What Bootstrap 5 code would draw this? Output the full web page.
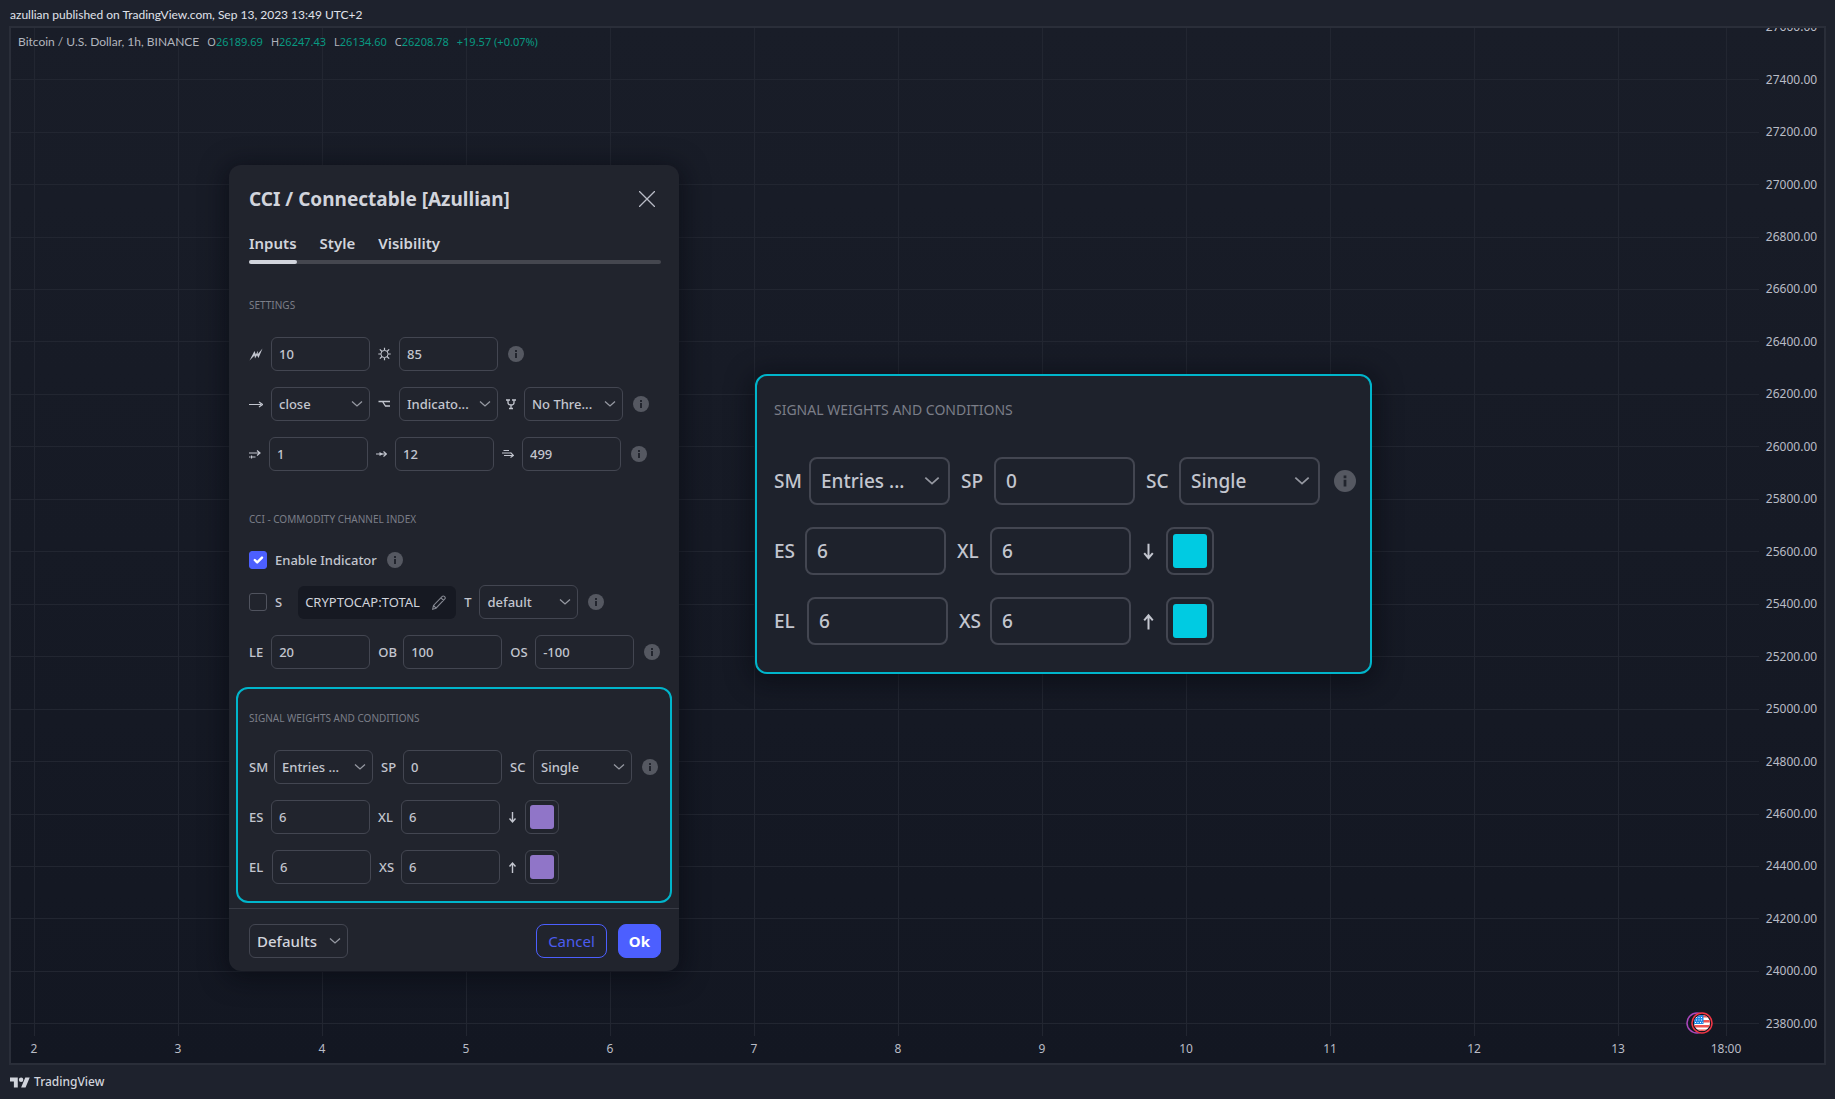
<!DOCTYPE html>
<html lang="en" data-bs-theme="dark">
<head>
<meta charset="utf-8">
<meta name="viewport" content="width=device-width, initial-scale=1">
<title>CCI / Connectable [Azullian]</title>
<link href="https://cdn.jsdelivr.net/npm/bootstrap@5.3.0/dist/css/bootstrap.min.css" rel="stylesheet">
<style>
:root{--tv-text:#d1d4dc;--tv-soft:#b9bcc6;--tv-line:#434651;--tv-dialog:#21242d;--tv-cyan:#00b5cb;--tv-blue:#4c5fff}
body{background:#1e222d;color:var(--tv-text);font-family:"Noto Sans","Open Sans",sans-serif;font-size:12px;line-height:16px}
.page-head{height:26px;padding:3px 10px 0;font-family:Lato,"Noto Sans",sans-serif;font-size:12px;color:#e0e3eb}
.page-foot{height:34px;padding:0 10px 0;font-size:12px;font-weight:500}
.chart-frame{margin:0 9px;border:2px solid #2a2e39;background:linear-gradient(#191d28,#131722);min-height:960px}
.time-scale{height:27px;margin-left:-49px;margin-right:62px;padding-top:5px;line-height:16px;color:var(--tv-soft)}
.t-cell{flex:2 0 0;text-align:center}
.t-cell:last-child,.v-cell:last-child{flex-grow:1}
.v-cell{flex:2 0 0;display:flex;justify-content:center}
.v-cell::before{content:"";width:1px;background:#222631}
.v-lines{left:-49px;right:-3px;top:0;bottom:0}
.h-lines{left:0;right:0;top:-27px;bottom:-14px}
.h-cell{flex:1 0 0;display:flex;align-items:center}
.h-cell::before{content:"";height:1px;width:100%;background:#222631}
.price-scale{width:65px;margin:-27px 0 -14px;color:var(--tv-soft)}
.p-cell{flex:1 0 0;display:flex;align-items:center;justify-content:center}
.plot{min-width:0}
.legend{left:7px;top:6px;color:#b2b5be}
.legend-name{font-family:Lato,"Noto Sans",sans-serif}
.legend .ohlc{font-size:11px}
.legend b{font-weight:400;color:#089981}
.event-pin{right:46px;bottom:1px}

.win{background:var(--tv-dialog);border-radius:12px;box-shadow:0 4px 24px 4px rgba(5,7,14,.55)}
.win-settings{left:218px;top:137px;width:450px}
.win-zoom{left:744px;top:346px;width:617px;border:2px solid var(--tv-cyan);background:#1e222c;padding:22px 17px 27px}
.win-body{padding:20px 20px 0}
.win-title{font-size:19px;line-height:28px;font-weight:700;margin:0 0 20px;color:var(--tv-text)}
.x-btn{background:none;border:0;padding:0;width:28px;height:28px;margin-right:-2px;color:#b9bcc6}
.tabs{height:31px;margin-bottom:33px;gap:23px;position:relative}
.tabs::before{content:"";position:absolute;left:0;right:-2px;bottom:0;height:4px;border-radius:2px;background:#45474f}
.tab-btn{background:none;border:0;padding:0 0 11px;font-size:15px;line-height:20px;font-weight:600;color:var(--tv-text);position:relative}
.tab-btn[aria-selected=true]::after{content:"";position:absolute;left:0;right:0;bottom:0;height:4px;border-radius:2px;background:var(--tv-text)}
.caption{font-size:10px;line-height:16px;font-weight:400;color:#7b7e88;margin:0 0 24px}
.stack{display:flex;flex-direction:column;gap:16px}
.stack+.caption{margin-top:40px}
.line{display:flex;align-items:center;gap:8px;font-size:13px;font-weight:500;color:#c3c6cf}
.line label{white-space:nowrap;line-height:18px}
.line svg{flex:none}
.lb-14{width:14px}.lb-15{width:15px}.lb-17{width:17px}
.box,.box:focus{flex:none;width:99px;height:34px;padding:0 7px;border:1px solid var(--tv-line);border-radius:6px;background-color:transparent;color:#c3c6cf;font-size:13px;line-height:18px;font-weight:500;box-shadow:none}
select.box,select.box:focus{background-image:url("data:image/svg+xml,%3csvg xmlns='http://www.w3.org/2000/svg' viewBox='0 0 12 12'%3e%3cpath fill='none' stroke='%239598a1' stroke-width='1.3' d='M1 3.500l5 4.500 5-4.500'/%3e%3c/svg%3e");background-size:12px 12px;background-position:right 6px center;padding-right:18px;text-overflow:clip}
.swatch{flex:none;width:34px;height:34px;padding:0;border:1px solid var(--tv-line);border-radius:6px;background:none;appearance:none}
.swatch::-webkit-color-swatch-wrapper{padding:4px}
.swatch::-webkit-color-swatch{border:0;border-radius:3px}
.info{margin-left:2px}
.tick{width:18px;height:18px;margin:0;flex:none;border:1px solid #50535e;border-radius:3px!important;background-color:transparent}
.tick:checked{background-color:var(--tv-blue);border-color:var(--tv-blue)}
.symbol{height:33px;width:158px;padding:0 10px 0 7px;margin-left:8px;border:0;border-radius:6px;background:#161922;color:#d1d4dc;font-size:13px;display:flex;align-items:center;justify-content:space-between}
.marked{border:2px solid var(--tv-cyan);border-radius:12px;margin:18px -13px 5px;padding:21px 11px 17px}
.win-foot{border-top:1px solid #383b45;padding:15px 18px 13px 20px;gap:11px}
.win-foot .box{font-size:15px;color:var(--tv-text)}
.act{height:34px;padding:0 11px;border-radius:8px;font-size:15px;line-height:20px}
.act-cancel{border:1px solid var(--tv-blue);color:#4c5cf0;background:none}
.act-ok{border:1px solid var(--tv-blue);background:var(--tv-blue);color:#fff;font-weight:700;padding:0 10px}

.big .caption{font-size:14px;line-height:24px;margin:0 0 35px}
.big .stack{gap:22px}
.big .line{gap:11px;font-size:19px}
.big .line label{line-height:26px}
.big .box{width:141px;height:48px;border-width:2px;border-radius:8px;padding-left:10px;font-size:19px;line-height:26px}
.big select.box{background-size:16px 16px;background-position:right 8px center}
.big .swatch{width:48px;height:48px;border-width:2px;border-radius:8px}
.big .swatch::-webkit-color-swatch-wrapper{padding:5px}
.big .lb-14{width:20px}.big .lb-15{width:22px}.big .lb-17{width:24px}
.big .info{width:22px;height:22px;margin-left:3px}
.big .arr{width:13px;height:20px}
</style>
<script src="https://cdn.jsdelivr.net/npm/bootstrap@5.3.0/dist/js/bootstrap.bundle.min.js"></script>
</head>
<body class="d-flex flex-column min-vh-100">
<svg class="d-none" xmlns="http://www.w3.org/2000/svg">
  <symbol id="i-info" viewBox="0 0 16 16"><circle cx="8" cy="8" r="8" fill="#555861"/><path d="M7 4h2v2H7zM7 7h2v5H7z" fill="#22252e"/></symbol>
  <symbol id="i-down" viewBox="0 0 9 14"><path d="M4.500 2v9.500M1.500 8.500l3 3.500 3-3.500" fill="none" stroke="currentColor" stroke-width="1.400"/></symbol>
  <symbol id="i-up" viewBox="0 0 9 14"><path d="M4.500 13V3.500M1.500 6.500l3-3.500 3 3.500" fill="none" stroke="currentColor" stroke-width="1.400"/></symbol>
</svg>

<header class="page-head d-flex align-items-center">azullian published on TradingView.com, Sep 13, 2023 13:49 UTC+2</header>

<main class="chart-frame flex-grow-1 d-flex flex-column position-relative overflow-hidden">
  <div class="d-flex flex-grow-1">
    <div class="plot flex-grow-1 position-relative">
      <div class="v-lines position-absolute d-flex" id="vLines"></div>
      <div class="h-lines position-absolute d-flex flex-column" id="hLines"></div>
      <svg class="event-pin position-absolute" width="28" height="24" viewBox="0 0 28 24" role="img" aria-label="Economic event">
        <circle cx="12" cy="12" r="10" fill="#131722" stroke="#ab47bc" stroke-width="1.500"/>
        <circle cx="17" cy="12" r="10" fill="#131722" stroke="#f23645" stroke-width="1.500"/>
        <clipPath id="fl"><circle cx="17" cy="12" r="8"/></clipPath>
        <g clip-path="url(#fl)"><path fill="#fff" d="M9 4h16v16H9z"/><path fill="#ef5350" d="M9 4h16v2.500H9zM9 9h16v2.500H9zM9 14h16v2.500H9z M9 18.500h16V20H9z"/><path fill="#1e88e5" d="M9 4h9.500v9H9z"/><path d="M11 6.500h7M11 9h7M10 11.500h8" stroke="#fff" stroke-width="1" stroke-dasharray="1 1.500"/></g>
      </svg>
    </div>
    <div class="price-scale d-flex flex-column" id="prices"></div>
  </div>
  <div class="time-scale d-flex" id="times"></div>

  <div class="legend position-absolute d-flex">
    <span class="legend-name me-2">Bitcoin / U.S. Dollar, 1h, BINANCE</span>
    <span class="ohlc d-flex gap-2"><span>O<b>26189.69</b></span><span>H<b>26247.43</b></span><span>L<b>26134.60</b></span><span>C<b>26208.78</b></span><b>+19.57 (+0.07%)</b></span>
  </div>

  <form class="win win-settings position-absolute" role="dialog" aria-labelledby="dlgTitle">
    <div class="win-body">
      <div class="d-flex justify-content-between">
        <h1 class="win-title" id="dlgTitle">CCI / Connectable [Azullian]</h1>
        <button type="button" class="x-btn" aria-label="Close"><svg width="16" height="16" viewBox="0 0 16 16"><path d="M0 0l16 16M16 0L0 16" stroke="currentColor" stroke-width="1.300"/></svg></button>
      </div>
      <div class="tabs d-flex" role="tablist">
        <button type="button" class="tab-btn" role="tab" aria-selected="true">Inputs</button>
        <button type="button" class="tab-btn" role="tab" aria-selected="false">Style</button>
        <button type="button" class="tab-btn" role="tab" aria-selected="false">Visibility</button>
      </div>

      <h2 class="caption">SETTINGS</h2>
      <div class="stack">
        <div class="line">
          <label for="len" aria-label="Length" class="d-flex"><svg width="14" height="14" viewBox="0 0 14 14"><path d="M.5 13.500L5.500 4l1.300 3.500L9 3.800l-.3 3.400L13.500 1.500 9.500 11 8 8.200 6 11.500l-.5-3z" fill="currentColor"/></svg></label>
          <input class="form-control box" id="len" value="10">
          <label for="smooth" aria-label="Smoothing" class="d-flex"><svg width="13" height="14" viewBox="0 0 13 14"><g fill="none" stroke="currentColor"><circle cx="6.500" cy="7" r="3.600"/><path d="M6.500 .8v2.500M6.500 10.700v2.500M.3 7h2.500M10.200 7h2.500M1.800 2.300l2.200 2.200M9 4.500l2.200-2.200M1.800 11.700L4 9.500M9 9.500l2.200 2.200" stroke-width="1.200"/></g></svg></label>
          <input class="form-control box" id="smooth" value="85">
          <svg class="info" width="16" height="16"><use href="#i-info"/></svg>
        </div>
        <div class="line">
          <label for="src" aria-label="Source" class="d-flex"><svg width="14" height="14" viewBox="0 0 14 14"><path d="M0 7.500h12M10 5l3.500 2.500L10 10" fill="none" stroke="currentColor" stroke-width="1.200"/></svg></label>
          <select class="form-select box" id="src"><option>close</option></select>
          <label for="kind" aria-label="Mode" class="d-flex"><svg width="13" height="14" viewBox="0 0 13 14"><path d="M.5 4.500h11.500M4.500 4.500l3 4.500H12" fill="none" stroke="currentColor" stroke-width="1.300"/></svg></label>
          <select class="form-select box" id="kind"><option>Indicato...</option></select>
          <label for="thr" aria-label="Threshold" class="d-flex"><svg width="10" height="14" viewBox="0 0 10 14"><path d="M0 3h4M6 3h4M2 3v2.500q0 2.500 3 2.500t3-2.500V3M5 8v3.500M3 11.500h4" fill="none" stroke="currentColor" stroke-width="1.300"/></svg></label>
          <select class="form-select box" id="thr"><option>No Thre...</option></select>
          <svg class="info" width="16" height="16"><use href="#i-info"/></svg>
        </div>
        <div class="line">
          <label for="n1" aria-label="From" class="d-flex"><svg width="12" height="14" viewBox="0 0 12 14"><path d="M0 6h11M8 3.500L11 6 8 8.500M0 10h1.500M2.500 10h4M2.500 8.500v3" fill="none" stroke="currentColor" stroke-width="1.200"/></svg></label>
          <input class="form-control box" id="n1" value="1">
          <label for="n2" aria-label="Through" class="d-flex"><svg width="11" height="14" viewBox="0 0 11 14"><path d="M0 7h10M7.500 4.500L10.500 7l-3 2.500" fill="none" stroke="currentColor" stroke-width="1.200"/><path d="M3.500 5L7 7 3.500 9z" fill="currentColor"/></svg></label>
          <input class="form-control box" id="n2" value="12">
          <label for="n3" aria-label="Until" class="d-flex"><svg width="12" height="14" viewBox="0 0 12 14"><path d="M1.500 3.500H7M0 6h8.500M2 8.500h9M8.500 5.500l3 3-3 2" fill="none" stroke="currentColor" stroke-width="1.100"/></svg></label>
          <input class="form-control box" id="n3" value="499">
          <svg class="info" width="16" height="16"><use href="#i-info"/></svg>
        </div>
      </div>

      <h2 class="caption">CCI - COMMODITY CHANNEL INDEX</h2>
      <div class="stack">
        <div class="line">
          <input type="checkbox" class="form-check-input tick" id="enable" checked>
          <label for="enable">Enable Indicator</label>
          <svg class="info" width="16" height="16"><use href="#i-info"/></svg>
        </div>
        <div class="line">
          <input type="checkbox" class="form-check-input tick" id="useSym">
          <label for="useSym">S</label>
          <button type="button" class="symbol"><span>CRYPTOCAP:TOTAL</span><svg width="14" height="15" viewBox="0 0 14 15"><path d="M.7 14.200l.8-3.800L10.300 1.400q1-.9 2 0l.5.500q.9 1 0 2L4 13.200zM9 2.800l2.700 2.700M1.500 10.400L4 13.200" fill="none" stroke="#868993" stroke-width="1.100"/></svg></button>
          <label for="tf">T</label>
          <select class="form-select box" id="tf"><option>default</option></select>
          <svg class="info" width="16" height="16"><use href="#i-info"/></svg>
        </div>
        <div class="line">
          <label class="lb-15" for="le">LE</label><input class="form-control box" id="le" value="20">
          <label class="lb-17" for="ob">OB</label><input class="form-control box" id="ob" value="100">
          <label class="lb-17" for="os">OS</label><input class="form-control box" id="os" value="-100">
          <svg class="info" width="16" height="16"><use href="#i-info"/></svg>
        </div>
      </div>

      <section class="marked">
        <h2 class="caption">SIGNAL WEIGHTS AND CONDITIONS</h2>
        <div class="stack">
          <div class="line">
            <label class="lb-17" for="sm">SM</label><select class="form-select box" id="sm"><option>Entries ...</option></select>
            <label class="lb-14" for="sp">SP</label><input class="form-control box" id="sp" value="0">
            <label class="lb-15" for="sc">SC</label><select class="form-select box" id="sc"><option>Single</option></select>
            <svg class="info" width="16" height="16"><use href="#i-info"/></svg>
          </div>
          <div class="line">
            <label class="lb-14" for="es">ES</label><input class="form-control box" id="es" value="6">
            <label class="lb-15" for="xl">XL</label><input class="form-control box" id="xl" value="6">
            <label for="c1" class="d-flex" aria-label="Down colour"><svg class="arr" width="9" height="14"><use href="#i-down"/></svg></label><input type="color" class="swatch" id="c1" value="#9075c8">
          </div>
          <div class="line">
            <label class="lb-15" for="el">EL</label><input class="form-control box" id="el" value="6">
            <label class="lb-14" for="xs">XS</label><input class="form-control box" id="xs" value="6">
            <label for="c2" class="d-flex" aria-label="Up colour"><svg class="arr" width="9" height="14"><use href="#i-up"/></svg></label><input type="color" class="swatch" id="c2" value="#9075c8">
          </div>
        </div>
      </section>
    </div>
    <div class="win-foot d-flex">
      <select class="form-select box me-auto" aria-label="Defaults"><option>Defaults</option></select>
      <button type="button" class="act act-cancel">Cancel</button>
      <button type="button" class="act act-ok">Ok</button>
    </div>
  </form>

  <section class="win win-zoom big position-absolute">
    <h2 class="caption">SIGNAL WEIGHTS AND CONDITIONS</h2>
    <div class="stack">
      <div class="line">
        <label class="lb-17" for="zsm">SM</label><select class="form-select box" id="zsm"><option>Entries ...</option></select>
        <label class="lb-15" for="zsp">SP</label><input class="form-control box" id="zsp" value="0">
        <label class="lb-15" for="zsc">SC</label><select class="form-select box" id="zsc"><option>Single</option></select>
        <svg class="info"><use href="#i-info"/></svg>
      </div>
      <div class="line">
        <label class="lb-14" for="zes">ES</label><input class="form-control box" id="zes" value="6">
        <label class="lb-15" for="zxl">XL</label><input class="form-control box" id="zxl" value="6">
        <label for="zc1" class="d-flex" aria-label="Down colour"><svg class="arr"><use href="#i-down"/></svg></label><input type="color" class="swatch" id="zc1" value="#00cbe2">
      </div>
      <div class="line">
        <label class="lb-15" for="zel">EL</label><input class="form-control box" id="zel" value="6">
        <label class="lb-14" for="zxs">XS</label><input class="form-control box" id="zxs" value="6">
        <label for="zc2" class="d-flex" aria-label="Up colour"><svg class="arr"><use href="#i-up"/></svg></label><input type="color" class="swatch" id="zc2" value="#00cbe2">
      </div>
    </div>
  </section>
</main>

<footer class="page-foot d-flex align-items-center">
  <svg class="me-1" width="20" height="11" viewBox="0 4 36 18" aria-hidden="true"><path fill="currentColor" d="M14 22H7V11H0V4h14v18zM28 22h-8l7.500-18h8L28 22z"/><circle fill="currentColor" cx="20" cy="8" r="4"/></svg>
  <span>TradingView</span>
</footer>

<script>
// Axis ticks: one equal cell per tick, the grid line and the label share the cell's centre.
const times = ['2','3','4','5','6','7','8','9','10','11','12','13','18:00'];
const prices = Array.from({length: 20}, (_, i) => (27600 - i * 200).toFixed(2));
document.getElementById('vLines').innerHTML = times.map(() => '<span class="v-cell"></span>').join('');
document.getElementById('times').innerHTML = times.map(t => `<span class="t-cell">${t}</span>`).join('');
document.getElementById('hLines').innerHTML = prices.map(() => '<span class="h-cell"></span>').join('');
document.getElementById('prices').innerHTML = prices.map(p => `<span class="p-cell">${p}</span>`).join('');
</script>
</body>
</html>
